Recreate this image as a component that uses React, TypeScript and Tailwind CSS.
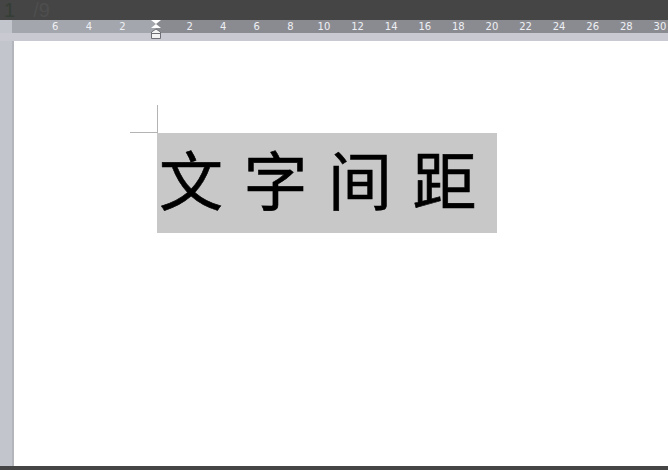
const leftNums = ["6", "4", "2"];
const rightNums = ["2", "4", "6", "8", "10", "12", "14", "16", "18", "20", "22", "24", "26", "28", "30"];

function IndentMarker() {
  return (
    <svg width="12" height="20" viewBox="0 0 12 20" className="block">
      <polygon points="1,0 11,0 6,4" fill="#ffffff" />
      <polygon points="6,4 11,8 1,8" fill="#ffffff" />
      <polygon points="6,9 10.5,12 10.5,18.5 1.5,18.5 1.5,12" fill="#f4f4f4" stroke="#6f7076" strokeWidth="1" />
      <line x1="1.5" y1="13.5" x2="10.5" y2="13.5" stroke="#6f7076" strokeWidth="1" />
    </svg>
  );
}

function Ruler() {
  return (
    <div className="relative flex h-[13px] text-[10px] leading-[13px] text-[#eef0f4]" style={{ fontFamily: "'DejaVu Sans', sans-serif" }}>
      <div className="w-[12px] bg-[#c3c5cc]" />
      <div className="flex w-[144px] justify-end bg-[#a4a6ad] pr-[16.8px]">
        {leftNums.map((n, i) => (
          <span key={i} className="w-[33.6px] shrink-0 text-center">
            {n}
          </span>
        ))}
      </div>
      <div className="flex flex-1 overflow-hidden bg-[#8a8b91] pl-[16.8px]">
        {rightNums.map((n, i) => (
          <span key={i} className="w-[33.6px] shrink-0 text-center">
            {n}
          </span>
        ))}
      </div>
      <div className="absolute left-[150px] top-0">
        <IndentMarker />
      </div>
    </div>
  );
}

export default function App() {
  return (
    <div className="flex h-[470px] w-[668px] flex-col overflow-hidden bg-[#c3c5cc]">
      <div className="flex h-[20px] shrink-0 items-start gap-[18px] overflow-hidden bg-[#454545] pl-[4px] text-[20px] leading-[20px]" style={{ fontFamily: "'Liberation Sans', sans-serif" }}>
        <span className="text-[#343e34]">1</span>
        <span className="text-[#4e4e4e]">/9</span>
      </div>

      <Ruler />

      <div className="h-[8px] shrink-0 bg-[#c8c9d1]" />

      <div className="flex min-h-0 flex-1">
        <div className="w-[12px] bg-[#c3c5cc]" />
        <div className="w-[2px] bg-[#b3b5bd]" />
        <div className="flex-1 bg-white">
          <div className="ml-[116px] mt-[64px] h-[28px] w-[28px] border-b border-r border-[#b4b4b4]" />
          <div
            className="ml-[143px] h-[100px] w-[340px] whitespace-nowrap bg-[#c8c8c8] pl-[2px] text-[64px] leading-[88px] tracking-[20.5px] text-black [-webkit-text-stroke:0.6px_black]"
            style={{ fontFamily: "'Noto Sans CJK SC', sans-serif" }}
          >
            文字间距
          </div>
        </div>
      </div>

      <div className="h-[4px] shrink-0 bg-[#454545]" />
    </div>
  );
}
